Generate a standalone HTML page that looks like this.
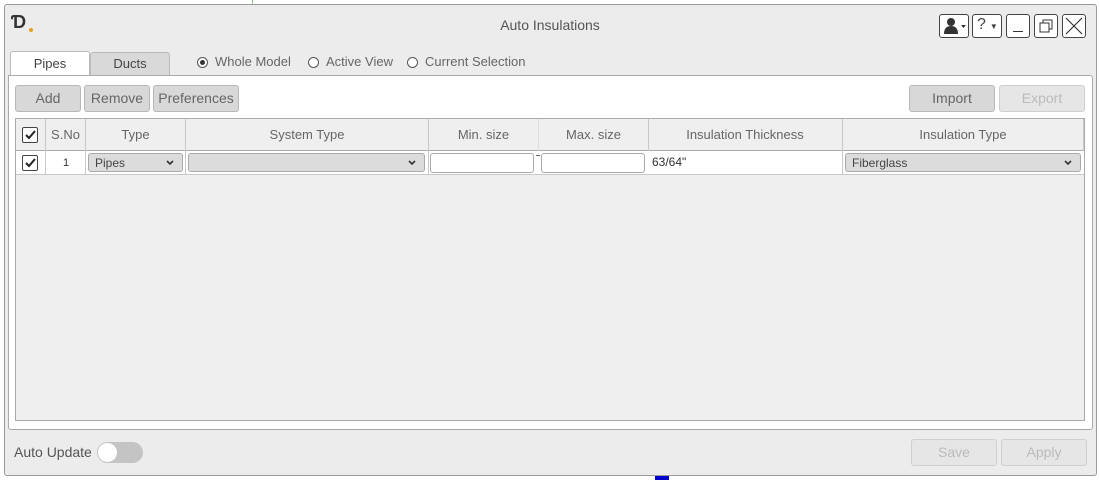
<!DOCTYPE html>
<html><head><style>
*{box-sizing:border-box;margin:0;padding:0}
body{width:1100px;height:480px;background:#fff;font-family:"Liberation Sans",sans-serif;font-size:13px;color:#555;position:relative;overflow:hidden}
.a{position:absolute}
.dlg{left:4px;top:4px;width:1093px;height:472px;background:#ececec;border:1px solid #9a9a9a;border-radius:3px}
.btn{position:absolute;background:#d8d8d8;border:1px solid #b8b8b8;border-radius:3px;color:#666;font-size:14px;text-align:center;line-height:24px;height:27px}
.dis{background:#e6e6e6;color:#bbb;border-color:#cfcfcf}
.wb{position:absolute;top:14px;width:24px;height:24px;border:1px solid #444;border-radius:3px;background:#fff}
.cell{position:absolute;border-right:1px solid #c8c8c8;text-align:center;color:#666}
.cb{position:absolute;width:16px;height:16px;border:1px solid #444;border-radius:2px;background:#fff}
.sel{position:absolute;height:19px;background:#dcdcdc;border:1px solid #aaa;border-radius:3px;font-size:12px;color:#444;padding-left:6px;line-height:19px}
.sel svg{position:absolute;right:8px;top:6px}
.inp{position:absolute;height:20px;background:#fff;border:1px solid #aaa;border-radius:3px}
.rad{position:absolute;top:57px;width:11px;height:11px;border:1px solid #555;border-radius:50%;background:#fff}
</style></head><body>
<div class="a" style="left:252px;top:0;width:1px;height:4px;background:#8c8"></div>
<div class="a dlg"></div>
<div class="a" style="left:11px;top:12px;font-weight:bold;font-size:18px;color:#333">Ɗ</div>
<div class="a" style="left:29px;top:28px;width:4px;height:4px;border-radius:50%;background:#e8a020"></div>
<div class="a" style="left:0;width:1100px;top:17px;text-align:center;font-size:14px;color:#555">Auto Insulations</div>
<div class="wb" style="left:939px;width:30px"><svg width="28" height="22"><circle cx="11" cy="7" r="4" fill="#333"/><path d="M4 19 Q4 11 11 11 Q18 11 18 19Z" fill="#333"/><path d="M21 10h5l-2.5 3z" fill="#333"/></svg></div>
<div class="wb" style="left:972px;width:30px;font-size:16px;color:#444;padding-left:4px;line-height:20px">?<span style="font-size:8px;margin-left:4px">▼</span></div>
<div class="wb" style="left:1006px"><div class="a" style="left:6px;top:16px;width:10px;height:1px;background:#333"></div></div>
<div class="wb" style="left:1034px"><svg width="22" height="22"><rect x="5" y="8" width="9" height="9" fill="none" stroke="#333"/><path d="M8 8V5h9v9h-3" fill="none" stroke="#333"/></svg></div>
<div class="wb" style="left:1062px"><svg width="22" height="22"><path d="M3 3L19 19M19 3L3 19" stroke="#333" stroke-width="1.2"/></svg></div>
<div class="a" style="left:10px;top:51px;width:80px;height:26px;background:#fff;border:1px solid #bbb;border-bottom:none;border-radius:3px 3px 0 0;text-align:center;line-height:24px;color:#444">Pipes</div>
<div class="a" style="left:90px;top:52px;width:80px;height:24px;background:#d9d9d9;border:1px solid #bbb;border-radius:3px 3px 0 0;text-align:center;line-height:22px;color:#444">Ducts</div>
<div class="rad" style="left:197px"><div class="a" style="left:2px;top:2px;width:5px;height:5px;border-radius:50%;background:#333"></div></div>
<div class="a" style="left:215px;top:54px;color:#666">Whole Model</div>
<div class="rad" style="left:308px"></div><div class="a" style="left:326px;top:54px;color:#666">Active View</div>
<div class="rad" style="left:407px"></div><div class="a" style="left:425px;top:54px;color:#666">Current Selection</div>
<div class="a" style="left:8px;top:75px;width:1085px;height:355px;background:#fff;border:1px solid #aaa;border-radius:0 3px 3px 3px"></div>
<div class="btn" style="left:15px;top:85px;width:66px">Add</div>
<div class="btn" style="left:84px;top:85px;width:66px">Remove</div>
<div class="btn" style="left:153px;top:85px;width:86px">Preferences</div>
<div class="btn" style="left:909px;top:85px;width:86px">Import</div>
<div class="btn dis" style="left:999px;top:85px;width:86px">Export</div>
<div class="a" style="left:15px;top:118px;width:1070px;height:303px;background:#efefef;border:1px solid #aaa"></div>
<div class="a" style="left:16px;top:119px;width:1068px;height:32px;border-bottom:1px solid #aaa"></div>
<div class="a" style="left:16px;top:151px;width:1068px;height:24px;background:#fff;border-bottom:1px solid #c8c8c8"></div>
<div class="cell" style="left:16px;top:119px;width:30px;height:56px"></div>
<div class="cell" style="left:46px;top:119px;width:40px;height:56px;line-height:32px">S.No</div>
<div class="cell" style="left:86px;top:119px;width:100px;height:56px;line-height:32px">Type</div>
<div class="cell" style="left:186px;top:119px;width:243px;height:56px;line-height:32px">System Type</div>
<div class="cell" style="left:429px;top:119px;width:110px;height:32px;line-height:32px;border-right-color:#ddd">Min. size</div>
<div class="cell" style="left:539px;top:119px;width:110px;height:32px;line-height:32px">Max. size</div>
<div class="cell" style="left:648px;top:119px;width:195px;height:56px;line-height:32px">Insulation Thickness</div>
<div class="cell" style="left:843px;top:119px;width:241px;height:32px;line-height:32px">Insulation Type</div>
<div class="cb" style="left:22px;top:127px"><svg width="14" height="14"><path d="M3 7l3 3 6-7" fill="none" stroke="#222" stroke-width="2"/></svg></div>
<div class="cb" style="left:22px;top:155px"><svg width="14" height="14"><path d="M3 7l3 3 6-7" fill="none" stroke="#222" stroke-width="2"/></svg></div>
<div class="a" style="left:46px;width:40px;top:157px;text-align:center;font-size:11px;color:#333">1</div>
<div class="sel" style="left:88px;top:153px;width:95px">Pipes<svg width="8" height="6"><path d="M1 1l3 3 3-3" fill="none" stroke="#333" stroke-width="1.6"/></svg></div>
<div class="sel" style="left:188px;top:153px;width:237px"><svg width="8" height="6"><path d="M1 1l3 3 3-3" fill="none" stroke="#333" stroke-width="1.6"/></svg></div>
<div class="inp" style="left:430px;top:153px;width:104px"></div>
<div class="a" style="left:536px;top:155px;width:4px;height:1px;background:#666"></div>
<div class="inp" style="left:541px;top:153px;width:104px"></div>
<div class="a" style="left:652px;top:155px;font-size:12px;color:#333">63/64"</div>
<div class="sel" style="left:845px;top:153px;width:236px">Fiberglass<svg width="8" height="6"><path d="M1 1l3 3 3-3" fill="none" stroke="#333" stroke-width="1.6"/></svg></div>
<div class="a" style="left:14px;top:444px;font-size:14px;color:#555">Auto Update</div>
<div class="a" style="left:97px;top:442px;width:46px;height:21px;border-radius:11px;background:#c4c4c4"></div>
<div class="a" style="left:98px;top:443px;width:19px;height:19px;border-radius:50%;background:#fff"></div>
<div class="btn dis" style="left:911px;top:439px;width:86px;height:27px">Save</div>
<div class="btn dis" style="left:1001px;top:439px;width:86px;height:27px">Apply</div>
<div class="a" style="left:655px;top:476px;width:14px;height:4px;background:#00c"></div>
</body></html>
